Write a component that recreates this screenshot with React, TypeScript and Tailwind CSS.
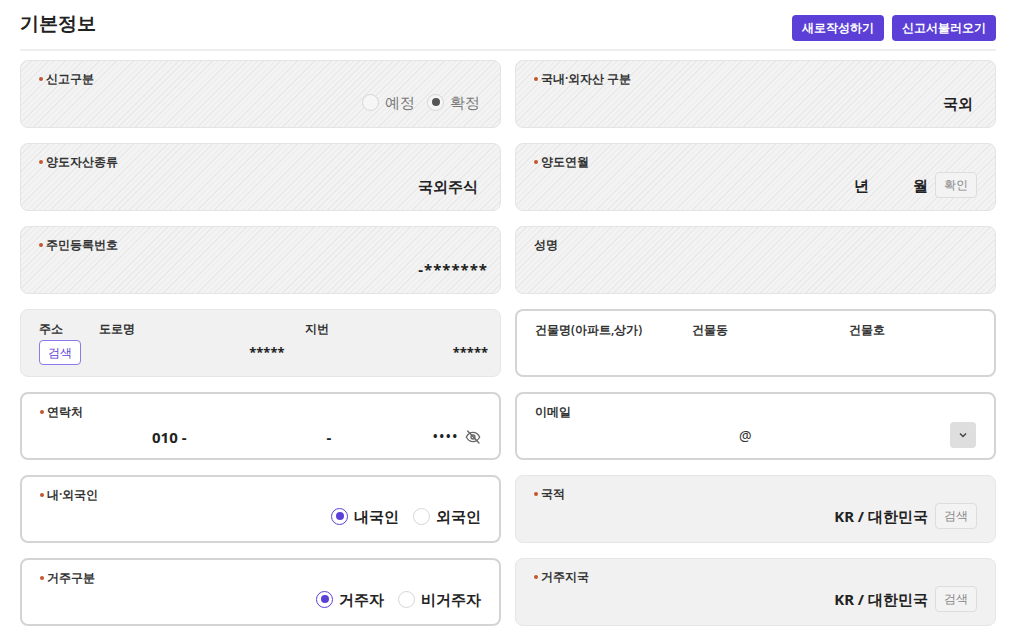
import React from "react";

const hatch =
  "border border-[#e4e4e4] bg-[#f1f1f1] bg-[repeating-linear-gradient(135deg,#f3f3f3_0px,#f3f3f3_3px,#e9e9e9_3px,#e9e9e9_4px)]";
const plain = "border-2 border-[#d4d4d4] bg-white";
const grey = "border border-[#e6e6e6] bg-[#f1f1f1]";

function Card({ kind, children }: { kind: string; children: React.ReactNode }) {
  return <div className={`h-[68px] rounded-lg ${kind} px-[18px] pt-[10px] flex flex-col`}>{children}</div>;
}

function Label({ text, req = true }: { text: string; req?: boolean }) {
  return (
    <div className="flex items-center text-[12px] font-semibold text-[#333] h-[16px]">
      {req && <span className="w-[4px] h-[4px] rounded-full bg-[#c2562f] mr-[3px]" />}
      {text}
    </div>
  );
}

function Radio({ on, label, active }: { on: boolean; label: string; active?: boolean }) {
  return (
    <div className="flex items-center gap-[6px]">
      <span
        className={`w-[17px] h-[17px] rounded-full border flex items-center justify-center ${
          active && on ? "border-[#5b3fd6] bg-white" : "border-[#d6d6d6] bg-[#f6f6f6]"
        } ${active && !on ? "bg-white border-[#888]" : ""}`}
      >
        {on && <span className={`w-[8px] h-[8px] rounded-full ${active ? "bg-[#5b3fd6]" : "bg-[#555]"}`} />}
      </span>
      <span className={`text-[15px] ${active ? "font-bold text-[#222]" : "text-[#777]"}`}>{label}</span>
    </div>
  );
}

function SmallBtn({ t }: { t: string }) {
  return (
    <span className="ml-[7px] px-[8px] h-[26px] flex items-center rounded border border-[#ddd] bg-[#f3f3f3] text-[12px] font-normal text-[#888]">
      {t}
    </span>
  );
}

export default function App() {
  return (
    <div className="w-[1013px] h-[642px] bg-white pl-[20px] pr-[17px] font-['Noto_Sans_CJK_KR','Noto_Sans',sans-serif] text-[#222] overflow-hidden">
      <div className="h-[51px] flex items-center justify-between border-b-2 border-[#eee]">
        <h1 className="text-[19px] font-bold text-[#222] pb-[2px]">기본정보</h1>
        <div className="flex gap-[8px] mt-[6px]">
          <button className="h-[26px] px-[10px] rounded bg-[#5b3fd6] text-white text-[12px] font-semibold">새로작성하기</button>
          <button className="h-[26px] px-[10px] rounded bg-[#5b3fd6] text-white text-[12px] font-semibold">신고서불러오기</button>
        </div>
      </div>
      <div className="grid grid-cols-2 gap-x-[14px] gap-y-[15px] mt-[9px]">
        <Card kind={hatch}>
          <Label text="신고구분" />
          <div className="flex justify-end items-center gap-[12px] mt-[4px] pr-[2px]">
            <Radio on={false} label="예정" />
            <Radio on label="확정" />
          </div>
        </Card>
        <Card kind={hatch}>
          <Label text="국내·외자산 구분" />
          <div className="flex justify-end mt-[5px] pr-[4px] text-[15px] font-bold">국외</div>
        </Card>
        <Card kind={hatch}>
          <Label text="양도자산종류" />
          <div className="flex justify-end mt-[5px] pr-[4px] text-[15px] font-bold">국외주식</div>
        </Card>
        <Card kind={hatch}>
          <Label text="양도연월" />
          <div className="flex justify-end items-center mt-[2px] text-[15px] font-bold">
            <span>년</span>
            <span className="ml-[44px]">월</span>
            <SmallBtn t="확인" />
          </div>
        </Card>
        <Card kind={hatch}>
          <Label text="주민등록번호" />
          <div className="flex justify-end mt-[5px] -mr-[6px] text-[15px] font-bold tracking-[1px]">-*******</div>
        </Card>
        <Card kind={hatch}>
          <Label text="성명" req={false} />
        </Card>
        <Card kind={grey}>
          <div className="grid grid-cols-[60px_1fr_1fr] text-[12px] font-semibold text-[#333]">
            <span>주소</span>
            <span>도로명</span>
            <span className="pl-[14px]">지번</span>
          </div>
          <div className="grid grid-cols-[60px_1fr_1fr] items-center mt-[2px]">
            <span className="w-[42px] h-[25px] border border-[#8b7ae8] rounded text-[12px] text-[#5b3fd6] bg-white flex items-center justify-center">검색</span>
            <span className="text-right text-[13px] font-bold pr-[6px]">*****</span>
            <span className="text-right text-[13px] font-bold -mr-[6px]">*****</span>
          </div>
        </Card>
        <Card kind={plain}>
          <div className="grid grid-cols-[157px_157px_1fr] text-[12px] font-semibold text-[#333]">
            <span>건물명(아파트,상가)</span>
            <span>건물동</span>
            <span>건물호</span>
          </div>
        </Card>
        <Card kind={plain}>
          <Label text="연락처" />
          <div className="flex items-center mt-[6px] text-[15px] font-bold">
            <span className="ml-[112px]">010 -</span>
            <span className="ml-[140px]">-</span>
            <span className="ml-auto tracking-[2px] text-[12px]">••••</span>
            <svg className="ml-[6px]" width="16" height="16" viewBox="0 0 24 24" fill="none" stroke="#666" strokeWidth="2" strokeLinecap="round">
              <path d="M2 12s3.5-7 10-7 10 7 10 7-3.5 7-10 7S2 12 2 12z" />
              <circle cx="12" cy="12" r="3" />
              <path d="M4 3l17 18" />
            </svg>
          </div>
        </Card>
        <Card kind={plain}>
          <Label text="이메일" req={false} />
          <div className="flex items-center mt-[2px]">
            <span className="ml-[204px] text-[14px] text-[#333]">@</span>
            <span className="ml-auto w-[26px] h-[26px] rounded bg-[#dedede] flex items-center justify-center">
              <svg width="12" height="12" viewBox="0 0 24 24" fill="none" stroke="#444" strokeWidth="3"><path d="M6 9l6 6 6-6" /></svg>
            </span>
          </div>
        </Card>
        <Card kind={plain}>
          <Label text="내·외국인" />
          <div className="flex justify-end items-center gap-[14px] mt-[2px]">
            <Radio on label="내국인" active />
            <Radio on={false} label="외국인" active />
          </div>
        </Card>
        <Card kind={grey}>
          <Label text="국적" />
          <div className="flex justify-end items-center mt-[1px] text-[15px] font-bold">
            KR / 대한민국
            <SmallBtn t="검색" />
          </div>
        </Card>
        <Card kind={plain}>
          <Label text="거주구분" />
          <div className="flex justify-end items-center gap-[14px] mt-[2px]">
            <Radio on label="거주자" active />
            <Radio on={false} label="비거주자" active />
          </div>
        </Card>
        <Card kind={grey}>
          <Label text="거주지국" />
          <div className="flex justify-end items-center mt-[1px] text-[15px] font-bold">
            KR / 대한민국
            <SmallBtn t="검색" />
          </div>
        </Card>
      </div>
    </div>
  );
}
